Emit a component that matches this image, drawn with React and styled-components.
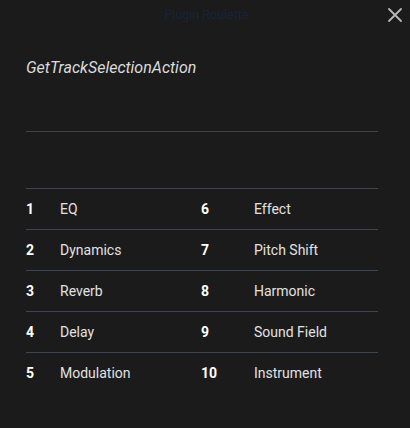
import styled, { createGlobalStyle } from 'styled-components';

const categories = [
  ['EQ', 'Effect'],
  ['Dynamics', 'Pitch Shift'],
  ['Reverb', 'Harmonic'],
  ['Delay', 'Sound Field'],
  ['Modulation', 'Instrument'],
];

export default function App() {
  return (
    <>
      <GlobalStyle />
      <Modal>
        <TopBar>
          <AppName>Plugin Roulette</AppName>
          <CloseButton aria-label="Close">
            <svg width="16" height="16" viewBox="0 0 16 16">
              <path d="M2 2 L14 14 M14 2 L2 14" stroke="#b9b9b9" strokeWidth="1.8" strokeLinecap="round" />
            </svg>
          </CloseButton>
        </TopBar>
        <Body>
          <ActionName>GetTrackSelectionAction</ActionName>
          <Divider />
          <Table>
            {categories.map(([left, right], index) => (
              <Row key={left}>
                <Num>{index + 1}</Num>
                <Name>{left}</Name>
                <Num>{index + 6}</Num>
                <Name>{right}</Name>
              </Row>
            ))}
          </Table>
        </Body>
      </Modal>
    </>
  );
}

const GlobalStyle = createGlobalStyle`
  html, body {
    margin: 0;
    background: #1b1b1b;
  }
  body {
    font-family: Roboto, 'Liberation Sans', sans-serif;
  }
`;

const Modal = styled.div`
  width: 410px;
  height: 428px;
  background: #1b1b1b;
  position: relative;
`;

const TopBar = styled.header`
  height: 28px;
  display: flex;
  align-items: center;
  justify-content: center;
`;

const AppName = styled.span`
  font-size: 12.5px;
  color: #18233a;
  margin-left: 3px;
`;

const CloseButton = styled.button`
  position: absolute;
  top: 6px;
  right: 6px;
  width: 18px;
  height: 18px;
  padding: 0;
  border: none;
  background: none;
  display: flex;
  align-items: center;
  justify-content: center;
  cursor: pointer;
`;

const Body = styled.main`
  padding: 0 32px 0 26px;
`;

const ActionName = styled.h2`
  margin: 30px 0 0;
  font-size: 16px;
  line-height: 20px;
  font-weight: 400;
  font-style: italic;
  color: #dcdcdc;
`;

const Divider = styled.hr`
  margin: 53px 0 0;
  border: none;
  border-top: 1px solid #3e444d;
  height: 0;
`;

const Table = styled.div`
  margin-top: 56px;
`;

const Row = styled.div`
  display: grid;
  grid-template-columns: 34px 141px 53px 1fr;
  align-items: center;
  height: 40px;
  border-top: 1px solid #3b4553;
  font-size: 14px;
`;

const Num = styled.span`
  color: #ffffff;
  font-weight: 700;
`;

const Name = styled.span`
  color: #e2e2e2;
`;
